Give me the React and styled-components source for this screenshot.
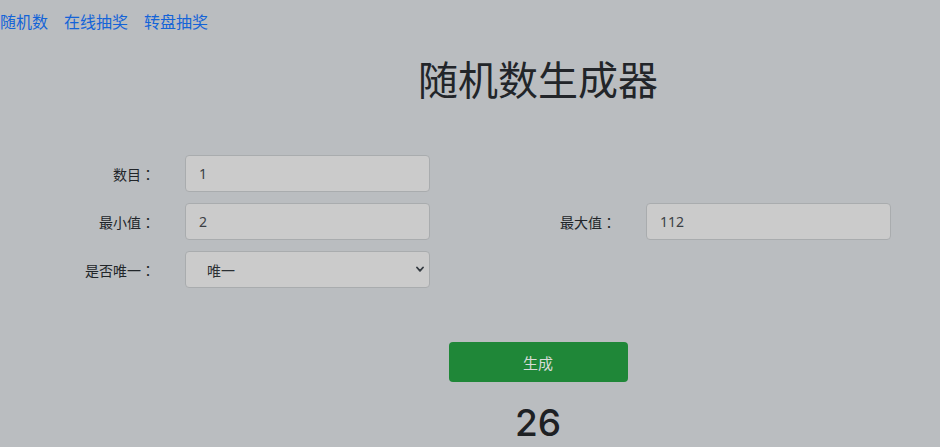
import React from "react";
import styled, { createGlobalStyle } from "styled-components";

const Global = createGlobalStyle`
  html, body { margin: 0; padding: 0; background: #babdc0; }
  body {
    font-family: "Noto Sans", "Noto Sans CJK SC", sans-serif;
    color: #212529;
    width: 940px;
    height: 447px;
    overflow: hidden;
  }
  * { box-sizing: border-box; }
`;

const Page = styled.div`
  display: flex;
  flex-direction: column;
`;

const Nav = styled.nav`
  display: flex;
  gap: 16px;
  height: 42px;
  align-items: center;
`;

const NavLink = styled.a`
  font-family: "Noto Sans CJK SC", sans-serif;
  font-size: 16px;
  color: #1464d8;
  text-decoration: none;
  line-height: 1;
`;

const Centered = styled.div`
  display: flex;
  flex-direction: column;
  align-items: center;
  padding-left: 136px;
`;

const Title = styled.h1`
  margin: 12px 0 0;
  font-family: "Noto Sans CJK SC", sans-serif;
  font-size: 40px;
  font-weight: 400;
  line-height: 48px;
  color: #222529;
`;

const Form = styled.div`
  display: grid;
  grid-template-columns: 170px 291px 170px 291px;
  row-gap: 11px;
  margin-top: 53px;
  align-items: center;
`;

const Label = styled.label`
  font-family: "Noto Sans CJK SC", sans-serif;
  font-size: 14px;
  text-align: right;
  padding-right: 15px;
  color: #212529;
`;

const Colon = styled.span`
  font-family: "Noto Sans CJK TC", sans-serif;
`;

const Field = styled.div`
  padding-left: 15px;
  padding-right: 31px;
`;

const Input = styled.input`
  width: 245px;
  height: 37px;
  background: #cbcbcb;
  border: 1px solid #a9acae;
  border-radius: 4px;
  padding: 0 13px;
  font-family: "Noto Sans", "Noto Sans CJK SC", sans-serif;
  font-size: 14px;
  color: #3b3f44;
  outline: none;
`;

const SelectWrap = styled.div`
  position: relative;
  width: 245px;
  height: 37px;
`;

const Select = styled.select`
  appearance: none;
  width: 100%;
  height: 100%;
  background: #cbcbcb;
  border: 1px solid #a9acae;
  border-radius: 4px;
  padding: 0 30px 0 21px;
  font-family: "Noto Sans CJK SC", sans-serif;
  font-size: 14px;
  color: #2b2f33;
  outline: none;
`;

const Chevron = styled.svg`
  position: absolute;
  right: 6px;
  top: 15px;
  width: 8px;
  height: 7px;
  pointer-events: none;
`;

const Button = styled.button`
  margin-top: 54px;
  width: 179px;
  height: 40px;
  background: #1f8738;
  border: none;
  border-radius: 4px;
  color: #d8dcd9;
  font-family: "Noto Sans CJK SC", sans-serif;
  font-size: 15px;
`;

const Result = styled.div`
  margin-top: 18px;
  font-family: "Inter", "Noto Sans", sans-serif;
  font-size: 37px;
  font-weight: 500;
  line-height: 46px;
  color: #1e2124;
`;

const Empty = styled.div``;

const FieldLabel = ({ children }) => (
  <Label>
    {children}
    <Colon>：</Colon>
  </Label>
);

export default function App() {
  return (
    <>
      <Global />
      <Page>
        <Nav>
          <NavLink href="#">随机数</NavLink>
          <NavLink href="#">在线抽奖</NavLink>
          <NavLink href="#">转盘抽奖</NavLink>
        </Nav>
        <Centered>
          <Title>随机数生成器</Title>
        </Centered>
        <Form>
          <FieldLabel>数目</FieldLabel>
          <Field><Input defaultValue="1" /></Field>
          <Empty />
          <Empty />
          <FieldLabel>最小值</FieldLabel>
          <Field><Input defaultValue="2" /></Field>
          <FieldLabel>最大值</FieldLabel>
          <Field><Input defaultValue="112" /></Field>
          <FieldLabel>是否唯一</FieldLabel>
          <Field>
            <SelectWrap>
              <Select defaultValue="1">
                <option value="1">唯一</option>
                <option value="0">不唯一</option>
              </Select>
              <Chevron viewBox="0 0 8 7">
                <path d="M1 1.5 L4 4.8 L7 1.5" fill="none" stroke="#343a40" strokeWidth="1.8" strokeLinecap="round" strokeLinejoin="round" />
              </Chevron>
            </SelectWrap>
          </Field>
          <Empty />
          <Empty />
        </Form>
        <Centered>
          <Button>生成</Button>
          <Result>26</Result>
        </Centered>
      </Page>
    </>
  );
}
